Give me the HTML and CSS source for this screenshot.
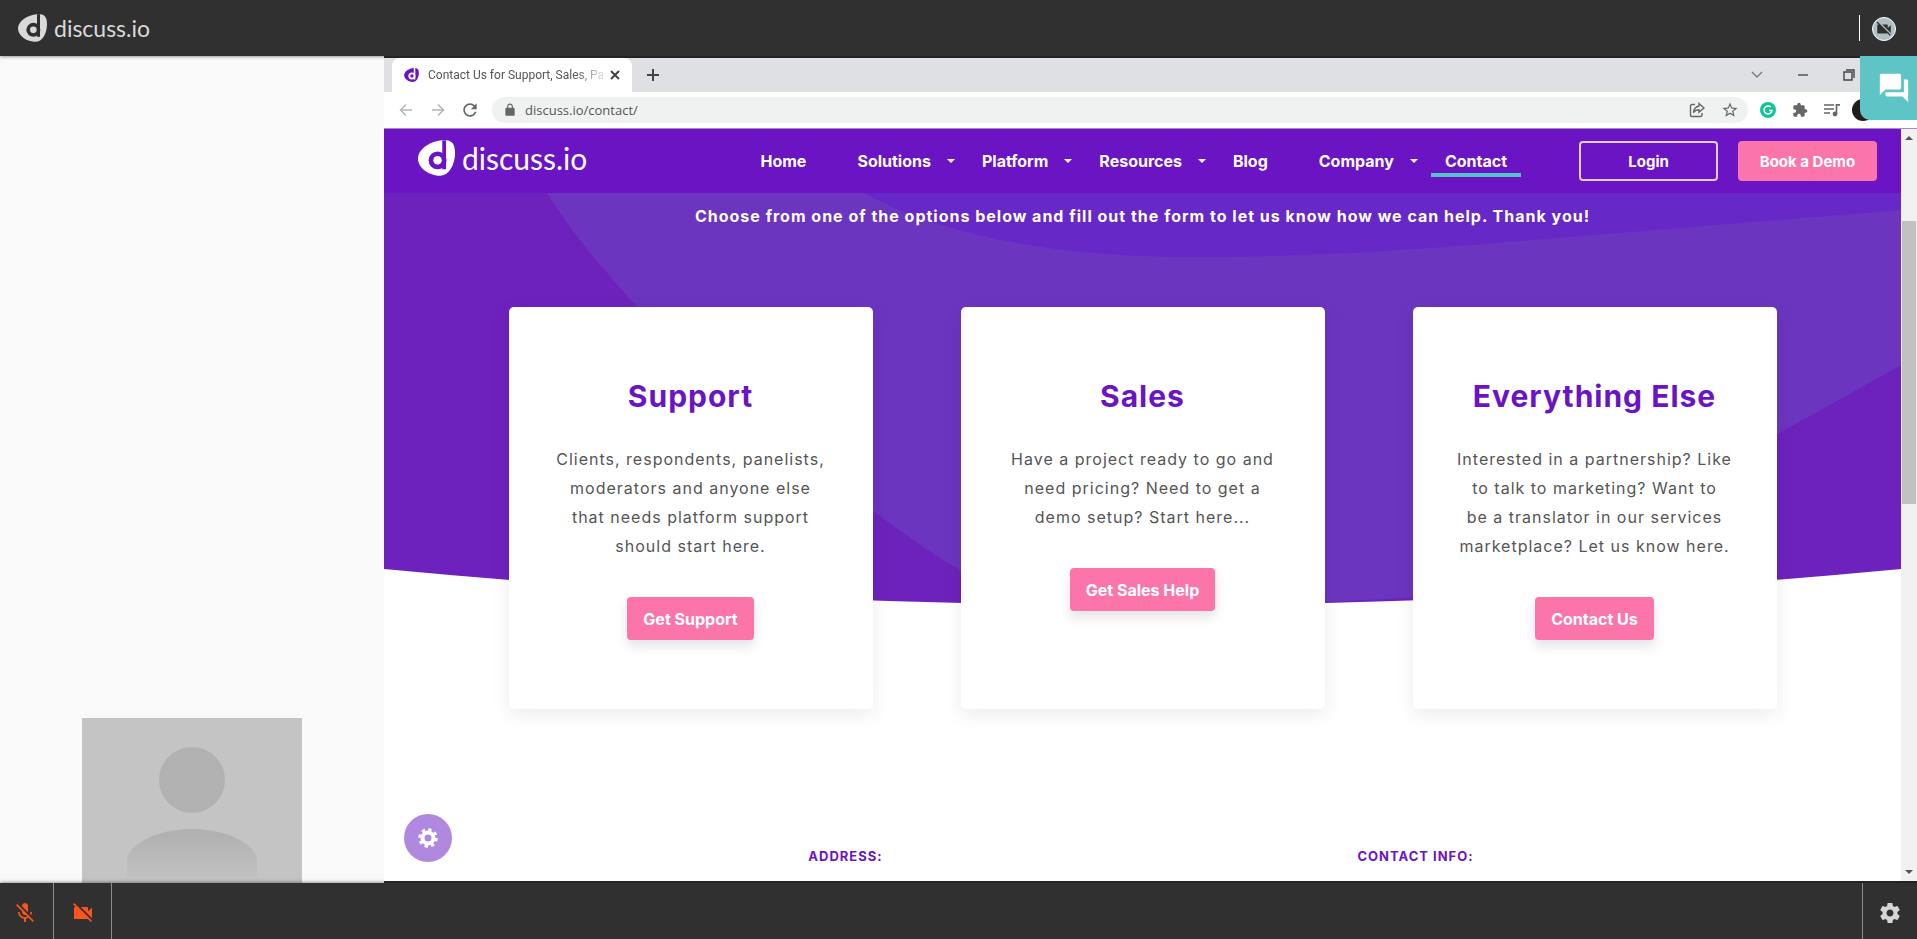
FILE: index.html
```html
<!DOCTYPE html>
<html lang="en">
<head>
    <meta charset="utf-8">
    <title>discuss.io</title>
    <link rel="stylesheet" href="styles.css">
</head>
<body>
    <!-- Shared icons -->
    <svg class="sprite" aria-hidden="true">
        <symbol id="logo" viewBox="0 0 87 83">
            <path fill="currentColor" d="M56 0C30 2 0 20 0 43c0 23 28 40 52 40 21 0 35-26 35-53C87 10 80 1 67 0z"/>
            <path class="logo-cut" d="M57 0h9v68h-9z"/>
            <circle class="logo-cut" cx="46" cy="47" r="21"/>
            <circle fill="currentColor" cx="46" cy="47" r="10"/>
        </symbol>
        <symbol id="videocam-off" viewBox="0 0 24 24">
            <path fill="currentColor" d="M21 6.5l-4 4V7c0-.55-.45-1-1-1H9.82L21 17.18V6.5zM3.27 2L2 3.27 4.73 6H4c-.55 0-1 .45-1 1v10c0 .55.45 1 1 1h12c.21 0 .39-.08.54-.18L19.73 21 21 19.73 3.27 2z"/>
        </symbol>
        <symbol id="settings" viewBox="0 0 24 24">
            <path fill="currentColor" d="M19.43 12.98c.04-.32.07-.64.07-.98s-.03-.66-.07-.98l2.11-1.65c.19-.15.24-.42.12-.64l-2-3.46c-.12-.22-.39-.3-.61-.22l-2.49 1c-.52-.4-1.08-.73-1.69-.98l-.38-2.65C14.46 2.18 14.25 2 14 2h-4c-.25 0-.46.18-.49.42l-.38 2.65c-.61.25-1.17.59-1.69.98l-2.49-1c-.23-.09-.49 0-.61.22l-2 3.46c-.13.22-.07.49.12.64l2.11 1.65c-.04.32-.07.65-.07.98s.03.66.07.98l-2.11 1.65c-.19.15-.24.42-.12.64l2 3.46c.12.22.39.3.61.22l2.49-1c.52.4 1.08.73 1.69.98l.38 2.65c.03.24.24.42.49.42h4c.25 0 .46-.18.49-.42l.38-2.65c.61-.25 1.17-.59 1.69-.98l2.49 1c.23.09.49 0 .61-.22l2-3.46c.12-.22.07-.49-.12-.64l-2.11-1.65zM12 15.5c-1.93 0-3.5-1.57-3.5-3.5s1.57-3.5 3.5-3.5 3.5 1.57 3.5 3.5-1.57 3.5-3.5 3.5z"/>
        </symbol>
    </svg>

    <!-- Meeting header -->
    <header class="topbar">
        <a class="brand" href="#"><svg class="brand-icon"><use href="#logo"/></svg>discuss.io</a>
        <div class="topbar-right">
            <button class="camera-status" aria-label="Camera is off"><svg><use href="#videocam-off"/></svg></button>
        </div>
    </header>

    <main class="room">
        <aside class="people">
            <svg class="avatar" viewBox="0 0 220 165" role="img" aria-label="Participant">
                <defs>
                    <linearGradient id="fade" x1="0" y1="0" x2="0" y2="1">
                        <stop offset="0.1" stop-color="#b1b1b1"/>
                        <stop offset="1" stop-color="#c1c1c1"/>
                    </linearGradient>
                </defs>
                <rect width="220" height="165" fill="#c4c4c4"/>
                <circle cx="110" cy="62" r="33" fill="#b1b1b1"/>
                <path d="M45 159V143C45 126 76 111 110 111s65 15 65 32v16z" fill="url(#fade)"/>
            </svg>
        </aside>

        <!-- Shared screen -->
        <section class="screen">
            <div class="tabstrip">
                <div class="tab">
                    <svg class="tab-logo"><use href="#logo"/></svg>
                    <span class="tab-title">Contact Us for Support, Sales, Pa</span>
                    <button class="icon-btn tab-close" aria-label="Close tab">
                        <svg width="10" height="10" viewBox="0 0 10 10"><path d="M1 1l8 8M9 1L1 9" stroke="currentColor" stroke-width="2"/></svg>
                    </button>
                </div>
                <button class="icon-btn new-tab" aria-label="New tab">
                    <svg width="14" height="14" viewBox="0 0 14 14"><path d="M7 1v12M1 7h12" stroke="currentColor" stroke-width="2"/></svg>
                </button>
                <div class="window-controls">
                    <button class="icon-btn" aria-label="Search tabs">
                        <svg width="12" height="8" viewBox="0 0 12 8"><path d="M1 1l5 5 5-5" fill="none" stroke="#777" stroke-width="1.3"/></svg>
                    </button>
                    <button class="icon-btn" aria-label="Minimize">
                        <svg width="12" height="8" viewBox="0 0 12 8"><path d="M1 4h10" stroke="#555" stroke-width="1.5"/></svg>
                    </button>
                    <button class="icon-btn" aria-label="Restore">
                        <svg width="12" height="12" viewBox="0 0 12 12" fill="none" stroke="#444" stroke-width="1.4"><path d="M1 3h8v8H1z"/><path d="M3 1h8v8"/></svg>
                    </button>
                </div>
            </div>

            <div class="toolbar">
                <button class="icon-btn dim" aria-label="Back">
                    <svg width="14" height="14" viewBox="0 0 14 14" fill="none" stroke="currentColor" stroke-width="1.5"><path d="M13 7H1.5M7 1.5L1.5 7 7 12.5"/></svg>
                </button>
                <button class="icon-btn dim" aria-label="Forward">
                    <svg width="14" height="14" viewBox="0 0 14 14" fill="none" stroke="currentColor" stroke-width="1.5"><path d="M1 7h11.5M7 1.5L12.5 7 7 12.5"/></svg>
                </button>
                <button class="icon-btn" aria-label="Reload">
                    <svg width="20" height="20" viewBox="0 0 24 24"><path fill="currentColor" d="M17.65 6.35C16.2 4.9 14.21 4 12 4c-4.42 0-7.99 3.58-7.99 8s3.57 8 7.99 8c3.73 0 6.84-2.55 7.73-6h-2.08c-.82 2.33-3.04 4-5.65 4-3.31 0-6-2.69-6-6s2.69-6 6-6c1.66 0 3.14.69 4.22 1.78L13 11h7V4l-2.35 2.35z"/></svg>
                </button>
                <div class="address">
                    <svg width="14" height="14" viewBox="0 0 24 24"><path fill="currentColor" d="M18 8h-1V6c0-2.76-2.24-5-5-5S7 3.24 7 6v2H6c-1.1 0-2 .9-2 2v10c0 1.1.9 2 2 2h12c1.1 0 2-.9 2-2V10c0-1.1-.9-2-2-2zm-3 0H9V6c0-1.66 1.34-3 3-3s3 1.34 3 3z"/></svg>
                    <input type="text" value="discuss.io/contact/" aria-label="Address">
                    <button class="icon-btn" aria-label="Share">
                        <svg width="16" height="16" viewBox="0 0 16 16" fill="none" stroke="currentColor" stroke-width="1.4"><path d="M6 2.5H3A1.5 1.5 0 0 0 1.5 4v9A1.5 1.5 0 0 0 3 14.5h8.5A1.5 1.5 0 0 0 13 13v-2"/><path d="M10 1.5L15 6l-5 4.2V7.8C7.5 7.8 6 8.5 4.5 10.500 5 7 7 4.500 10 4z"/></svg>
                    </button>
                    <button class="icon-btn" aria-label="Bookmark">
                        <svg width="18" height="18" viewBox="0 0 24 24"><path fill="currentColor" d="M22 9.24l-7.19-.62L12 2 9.19 8.63 2 9.24l5.46 4.73L5.82 21 12 17.27 18.18 21l-1.63-7.03L22 9.24zM12 15.4l-3.76 2.27 1-4.28-3.32-2.88 4.38-.38L12 6.1l1.71 4.04 4.38.38-3.32 2.88 1 4.28L12 15.4z"/></svg>
                    </button>
                </div>
                <div class="extensions">
                    <button class="icon-btn" aria-label="Grammar">
                        <svg width="16" height="16" viewBox="0 0 16 16"><circle cx="8" cy="8" r="8" fill="#15c39a"/><path d="M10.8 5A4 4 0 1 0 12 8.6H9" fill="none" stroke="#fff" stroke-width="1.5"/></svg>
                    </button>
                    <button class="icon-btn" aria-label="Extensions">
                        <svg width="16" height="16" viewBox="0 0 24 24"><path fill="currentColor" d="M20.5 11H19V7c0-1.1-.9-2-2-2h-4V3.5C13 2.12 11.88 1 10.5 1S8 2.12 8 3.5V5H4c-1.1 0-1.99.9-1.99 2v3.8H3.5c1.49 0 2.7 1.21 2.7 2.7s-1.21 2.7-2.7 2.7H2V20c0 1.1.9 2 2 2h3.8v-1.5c0-1.49 1.21-2.7 2.7-2.7 1.49 0 2.7 1.21 2.7 2.7V22H17c1.1 0 2-.9 2-2v-4h1.5c1.38 0 2.5-1.12 2.5-2.5S21.88 11 20.5 11z"/></svg>
                    </button>
                    <button class="icon-btn" aria-label="Media">
                        <svg width="16" height="14" viewBox="0 0 16 14"><path d="M0 2h10M0 6h10M0 10h6M12.5 11V1.8H16" fill="none" stroke="currentColor" stroke-width="1.7"/><circle cx="11" cy="11" r="2.4" fill="currentColor"/></svg>
                    </button>
                    <span class="profile"></span>
                </div>
            </div>

            <div class="viewport">
                <div class="site">
                    <nav class="site-nav">
                        <a class="site-logo" href="#"><svg class="site-logo-icon"><use href="#logo"/></svg>discuss.io</a>
                        <div class="links">
                            <a class="plain" href="#">Home</a>
                            <a class="drop" href="#">Solutions</a>
                            <a class="drop" href="#">Platform</a>
                            <a class="drop" href="#">Resources</a>
                            <a class="plain" href="#">Blog</a>
                            <a class="drop" href="#">Company</a>
                            <a class="active" href="#">Contact</a>
                        </div>
                        <div class="nav-buttons">
                            <button class="btn btn-outline">Login</button>
                            <button class="btn btn-pink">Book a Demo</button>
                        </div>
                    </nav>

                    <div class="hero">
                        <svg class="hero-bg" viewBox="0 0 1517 412" preserveAspectRatio="none" aria-hidden="true">
                            <path fill="#6d22bd" d="M0 0H1517V376Q1138 412 758 412T0 376z"/>
                            <path fill="#6b35bf" d="M163 0C185 35 205 60 253 114C330 180 400 250 489 318C530 348 550 362 576 377C620 398 660 409 680 411L758 412C850 412 960 410 1060 402C1180 350 1300 290 1392 242L1517 172V0z"/>
                            <path fill="#6728c8" d="M480 0C540 32 640 64 806 64C950 64 1060 54 1161 46L1517 17V0z"/>
                        </svg>
                        <p class="lead">Choose from one of the options below and fill out the form to let us know how we can help. Thank you!</p>
                        <div class="cards">
                            <div class="card">
                                <h2>Support</h2>
                                <p>Clients, respondents, panelists,<br>moderators and anyone else<br>that needs platform support<br>should start here.</p>
                                <button class="btn btn-pink">Get Support</button>
                            </div>
                            <div class="card">
                                <h2>Sales</h2>
                                <p>Have a project ready to go and<br>need pricing? Need to get a<br>demo setup? Start here...</p>
                                <button class="btn btn-pink">Get Sales Help</button>
                            </div>
                            <div class="card">
                                <h2>Everything Else</h2>
                                <p>Interested in a partnership? Like<br>to talk to marketing? Want to<br>be a translator in our services<br>marketplace? Let us know here.</p>
                                <button class="btn btn-pink">Contact Us</button>
                            </div>
                        </div>
                    </div>

                    <div class="details">
                        <h3>ADDRESS:</h3>
                        <h3>CONTACT INFO:</h3>
                    </div>

                    <button class="cookie-btn" aria-label="Cookie settings">
                        <svg width="20" height="20" viewBox="0 0 20 20"><circle cx="10" cy="10" r="5.5" fill="none" stroke="#fff" stroke-width="4"/><circle cx="10" cy="10" r="8.2" fill="none" stroke="#fff" stroke-width="3.2" stroke-dasharray="3.22 3.22"/></svg>
                    </button>
                </div>

                <div class="scrollbar" aria-hidden="true">
                    <span class="arrow-up"></span>
                    <div class="track"><div class="thumb"></div></div>
                    <span class="arrow-down"></span>
                </div>
            </div>
        </section>

        <button class="chat-btn" aria-label="Open chat">
            <svg width="34" height="34" viewBox="0 0 24 24"><path fill="currentColor" d="M21 6h-2v9H6v2c0 .55.45 1 1 1h11l4 4V7c0-.55-.45-1-1-1zm-4 6V3c0-.55-.45-1-1-1H3c-.55 0-1 .45-1 1v14l4-4h10c.55 0 1-.45 1-1z"/></svg>
        </button>
    </main>

    <!-- Meeting controls -->
    <footer class="bottombar">
        <button class="control mic" aria-label="Unmute microphone">
            <svg viewBox="0 0 24 24"><path fill="currentColor" d="M19 11h-1.7c0 .74-.16 1.43-.43 2.05l1.23 1.23c.56-.98.9-2.09.9-3.28zm-4.02.17c0-.06.02-.11.02-.17V5c0-1.66-1.34-3-3-3S9 3.34 9 5v.18l5.98 5.99zM4.27 3L3 4.27l6.01 6.01V11c0 1.66 1.33 3 2.99 3 .22 0 .44-.03.65-.08l1.66 1.66c-.71.33-1.5.52-2.31.52-2.76 0-5.3-2.1-5.3-5.1H5c0 3.41 2.72 6.23 6 6.72V21h2v-3.28c.91-.13 1.77-.45 2.54-.9L19.73 21 21 19.73 4.27 3z"/></svg>
        </button>
        <button class="control cam" aria-label="Turn camera on"><svg><use href="#videocam-off"/></svg></button>
        <button class="control gear" aria-label="Settings"><svg><use href="#settings"/></svg></button>
    </footer>
</body>
</html>
```
FILE: styles.css
```css
* {
    box-sizing: border-box;
}

body {
    margin: 0;
    height: 100vh;
    display: grid;
    grid-template-rows: 56px 1fr 56px;
    background-color: #fafafa;
    font-family: Inter, "Liberation Sans", sans-serif;
    overflow: hidden;
}

button {
    border: none;
    padding: 0;
    background: none;
    font-family: inherit;
    cursor: pointer;
}

a {
    text-decoration: none;
}

svg {
    display: block;
}

.sprite {
    position: absolute;
    width: 0;
    height: 0;
}

.logo-cut {
    fill: var(--cut);
}

/* meeting header and footer */
.topbar,
.bottombar {
    display: flex;
    background-color: #303030;
    box-shadow: 0 0 4px rgba(0, 0, 0, 0.6);
    z-index: 2;
}

.topbar {
    align-items: center;
    justify-content: space-between;
    padding: 0 21px 0 18px;
}

.brand,
.site-logo {
    display: flex;
    align-items: center;
    gap: 7px;
    font-family: Lato, sans-serif;
}

.brand {
    --cut: #303030;
    color: #d9d9d9;
    font-size: 23px;
}

.brand-icon {
    width: 29px;
    height: 28px;
}

.topbar-right {
    border-left: 1px solid #fff;
    padding-left: 12px;
}

.camera-status {
    width: 24px;
    height: 24px;
    margin-top: 2px;
    display: grid;
    place-items: center;
    border: 1px solid #fff;
    border-radius: 50%;
    background-color: #b0bec5;
    color: #303030;
}

.camera-status svg {
    width: 18px;
    height: 18px;
}

.control {
    width: 58px;
    display: grid;
    place-items: center;
    padding-top: 4px;
    border-right: 1px solid #8a8a8a;
    color: #fa541c;
}

.control svg {
    width: 24px;
    height: 24px;
}

.mic {
    width: 54px;
    padding-right: 4px;
}

.gear {
    width: 55px;
    margin-left: auto;
    border-right: none;
    border-left: 1px solid #8a8a8a;
    color: #d6d6d6;
}

/* room */
.room {
    position: relative;
    min-height: 0;
    display: grid;
    grid-template-columns: 384px 1fr;
}

.people {
    display: flex;
    flex-direction: column;
    justify-content: flex-end;
    align-items: center;
}

.avatar {
    width: 220px;
    height: 165px;
}

.screen {
    min-width: 0;
    min-height: 0;
    position: relative;
    z-index: 3;
    display: flex;
    flex-direction: column;
    border-top: 2px solid #232323;
    border-bottom: 2px solid #232323;
    background-color: #fff;
    color: #555;
}

.chat-btn {
    position: absolute;
    top: 0;
    right: 0;
    z-index: 4;
    width: 57px;
    height: 64px;
    padding-left: 17px;
    border-bottom-left-radius: 10px;
    background-color: #5fc4c5;
    color: #fff;
}

/* browser window */
.icon-btn {
    display: grid;
    place-items: center;
    color: #666;
}

.tabstrip {
    flex: none;
    display: flex;
    align-items: center;
    height: 34px;
    padding-left: 8px;
    background-color: #dee0e4;
}

.tab {
    display: flex;
    align-items: center;
    width: 240px;
    height: 34px;
    padding: 0 12px;
    border-radius: 8px 8px 0 0;
    background-color: #fff;
}

.tab-logo {
    --cut: #fff;
    flex: none;
    width: 15px;
    height: 14px;
    color: #6a14c4;
}

.tab-title {
    flex: 1;
    margin-left: 9px;
    white-space: nowrap;
    font-family: Roboto, sans-serif;
    font-size: 12px;
    -webkit-mask-image: linear-gradient(to right, #000 80%, transparent 100%);
    mask-image: linear-gradient(to right, #000 80%, transparent 100%);
}

.tab-close,
.new-tab {
    color: #444;
}

.new-tab {
    margin-left: 14px;
}

.window-controls {
    display: flex;
    gap: 34px;
    margin-left: auto;
    margin-right: 62px;
}

.toolbar {
    flex: none;
    display: flex;
    align-items: center;
    height: 37px;
    padding-left: 12px;
    gap: 12px;
    border-bottom: 1px solid #a98bc4;
}

.toolbar > .icon-btn {
    width: 20px;
}

.toolbar > .dim {
    color: #b5b5b5;
}

.address {
    flex: 1;
    display: flex;
    align-items: center;
    height: 26px;
    padding: 0 9px 0 11px;
    gap: 16px;
    border-radius: 13px;
    background-color: #f0f2f2;
    color: #666;
}

.address input {
    flex: 1;
    min-width: 0;
    margin-left: -8px;
    padding: 0;
    border: none;
    background: none;
    color: #555;
    font-family: "Open Sans", sans-serif;
    font-size: 13px;
    outline: none;
}

.extensions {
    display: flex;
    align-items: center;
    gap: 16px;
    margin-right: 43px;
}

.profile {
    width: 22px;
    height: 22px;
    margin-left: -4px;
    border-radius: 50%;
    background-color: #241a1a;
}

.viewport {
    flex: 1;
    min-height: 0;
    display: flex;
}

/* contact page */
.site {
    position: relative;
    flex: 1;
    min-width: 0;
    overflow: hidden;
}

.site-nav {
    display: flex;
    align-items: center;
    height: 64px;
    padding: 0 24px 0 34px;
    background-color: #6a14c4;
}

.site-logo {
    --cut: #6a14c4;
    padding-bottom: 6px;
    color: #fff;
    font-size: 30px;
}

.site-logo-icon {
    width: 37px;
    height: 36px;
}

.links {
    display: flex;
    align-items: center;
    gap: 27px;
    margin-left: auto;
    margin-right: 58px;
}

.links a {
    color: #fff;
    font-size: 16px;
    font-weight: 700;
    line-height: 24px;
}

.plain {
    margin-right: 24px;
}

.drop {
    display: flex;
    align-items: center;
    gap: 16px;
}

.drop::after {
    content: "";
    border: 4px solid transparent;
    border-top-color: #fff;
    border-bottom: none;
}

.links .active {
    margin: 4px 0 0 -14px;
    padding: 0 14px;
    border-bottom: 4px solid #4fc3c7;
}

.nav-buttons {
    display: flex;
    gap: 20px;
}

.btn {
    height: 43px;
    padding: 0 16px;
    border-radius: 4px;
    color: #fff;
    font-size: 16px;
    font-weight: 700;
}

.nav-buttons .btn {
    width: 139px;
    height: 40px;
    padding: 0;
    font-size: 15px;
}

.btn-outline {
    border: 2px solid #e3cdf6;
}

.btn-pink {
    background-color: #fb75ab;
}

.hero {
    position: relative;
    padding-top: 11px;
}

.hero-bg {
    position: absolute;
    top: 0;
    left: 0;
    width: 100%;
    height: 412px;
}

.lead {
    position: relative;
    margin: 0 0 79px;
    color: #fff;
    font-size: 16px;
    font-weight: 700;
    line-height: 24px;
    letter-spacing: 1px;
    text-align: center;
}

.cards {
    position: relative;
    display: grid;
    grid-template-columns: repeat(3, 1fr);
    gap: 88px;
    max-width: 1268px;
    margin: 0 auto;
}

.card {
    padding: 69px 16px;
    border-radius: 5px;
    background-color: #fff;
    box-shadow: 0 6px 20px rgba(0, 0, 0, 0.08);
    text-align: center;
}

.card h2 {
    margin: 0 0 29px;
    color: #6a14c4;
    font-size: 30px;
    line-height: 40px;
    letter-spacing: 1px;
}

.card p {
    margin: 0 0 36px;
    color: #555;
    font-size: 16px;
    line-height: 29px;
    letter-spacing: 1px;
}

.card .btn {
    box-shadow: 0 6px 12px rgba(50, 50, 93, 0.14);
}

.details {
    display: grid;
    grid-template-columns: 1fr 1fr;
    max-width: 1164px;
    margin: 137px auto 0;
    padding-right: 24px;
    text-align: center;
}

.details h3 {
    margin: 0;
    color: #6a14c4;
    font-size: 13px;
    line-height: 20px;
    letter-spacing: 1px;
}

.cookie-btn {
    position: absolute;
    left: 20px;
    bottom: 19px;
    width: 48px;
    height: 48px;
    display: grid;
    place-items: center;
    border-radius: 50%;
    background-color: #b088e0;
}

/* page scrollbar */
.scrollbar {
    flex: none;
    width: 16px;
    display: flex;
    flex-direction: column;
    align-items: center;
    padding: 7px 1px;
    background-color: #f1f1f1;
}

.arrow-up,
.arrow-down {
    border: 4px solid transparent;
}

.arrow-up {
    border-top: none;
    border-bottom-color: #555;
}

.arrow-down {
    border-bottom: none;
    border-top-color: #555;
}

.track {
    flex: 1;
    width: 100%;
    display: grid;
    grid-template-rows: 81fr 283fr 366fr;
}

.thumb {
    grid-row: 2;
    background-color: #c1c1c1;
}
```
